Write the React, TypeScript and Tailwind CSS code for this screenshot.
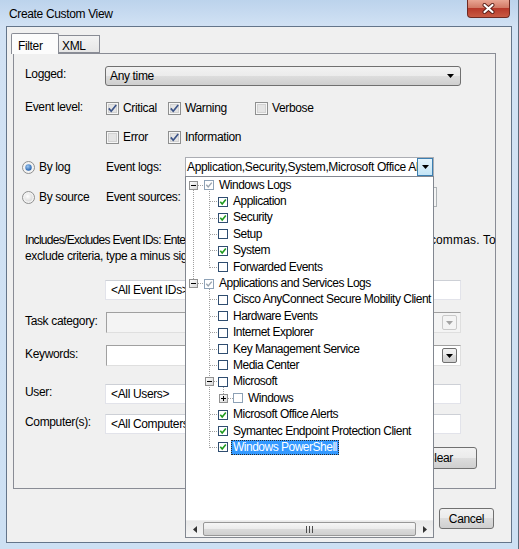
import React from 'react';

type TreeState = 'on' | 'off' | 'gray' | 'grayoff';

interface TreeItem {
  label: string;
  level: 0 | 1 | 2;
  state: TreeState;
  selected?: boolean;
}

const treeItems: TreeItem[] = [
  { label: 'Windows Logs', level: 0, state: 'gray' },
  { label: 'Application', level: 1, state: 'on' },
  { label: 'Security', level: 1, state: 'on' },
  { label: 'Setup', level: 1, state: 'off' },
  { label: 'System', level: 1, state: 'on' },
  { label: 'Forwarded Events', level: 1, state: 'off' },
  { label: 'Applications and Services Logs', level: 0, state: 'gray' },
  { label: 'Cisco AnyConnect Secure Mobility Client', level: 1, state: 'off' },
  { label: 'Hardware Events', level: 1, state: 'off' },
  { label: 'Internet Explorer', level: 1, state: 'off' },
  { label: 'Key Management Service', level: 1, state: 'off' },
  { label: 'Media Center', level: 1, state: 'off' },
  { label: 'Microsoft', level: 1, state: 'off' },
  { label: 'Windows', level: 2, state: 'grayoff' },
  { label: 'Microsoft Office Alerts', level: 1, state: 'on' },
  { label: 'Symantec Endpoint Protection Client', level: 1, state: 'on' },
  { label: 'Windows PowerShell', level: 1, state: 'on', selected: true },
];

const levelPad = ['pl-[18px]', 'pl-[32px]', 'pl-[47px]'];
const ROW_H = 16.4;
const cy = (i: number) => Math.floor(ROW_H * i + ROW_H / 2) + 0.5;

const btnBg = 'bg-[linear-gradient(#f2f2f2,#ebebeb_50%,#dddddd_50%,#cfcfcf)]';

const Arrow = ({ color = '#000' }: { color?: string }) => (
  <svg width="7" height="4" viewBox="0 0 7 4">
    <path d="M0 0H7L3.5 4Z" fill={color} />
  </svg>
);

const Check = ({ checked }: { checked?: boolean }) => (
  <svg width="13" height="13" viewBox="0 0 13 13" className="shrink-0">
    <rect x="0.5" y="0.5" width="12" height="12" fill="#f6f6f6" stroke="#8e8f8f" />
    <rect x="2.5" y="2.5" width="8" height="8" fill="#e4e4e4" stroke="#d2d2d2" />
    {checked && <path d="M2.8 6.4 5.2 9.2 10.2 3" fill="none" stroke="#3c5488" strokeWidth="1.7" />}
  </svg>
);

const Radio = ({ on }: { on?: boolean }) => (
  <svg width="13" height="13" viewBox="0 0 13 13" className="shrink-0">
    <defs>
      <radialGradient id={on ? 'rdon' : 'rdoff'} cx="0.4" cy="0.35" r="0.7">
        <stop offset="0" stopColor={on ? '#9cc7f2' : '#ffffff'} />
        <stop offset="1" stopColor={on ? '#1c5aa8' : '#d8d8d8'} />
      </radialGradient>
    </defs>
    <circle cx="6.5" cy="6.5" r="6" fill="#f3f3f3" stroke="#8e8f8f" />
    <circle cx="6.5" cy="6.5" r={on ? 3.2 : 4} fill={`url(#${on ? 'rdon' : 'rdoff'})`} />
  </svg>
);

const TreeCheck = ({ state }: { state: TreeState }) => {
  const light = state === 'gray' || state === 'grayoff';
  return (
    <svg width="10" height="10" viewBox="0 0 10 10" className="shrink-0">
      <rect x="0.5" y="0.5" width="9" height="9" fill="#fff" stroke={light ? '#8da1b6' : '#2f4d70'} />
      {state === 'on' && <path d="M2.3 4.8 4.2 7 7.8 2.6" fill="none" stroke="#1e9a1e" strokeWidth="1.6" />}
      {state === 'gray' && <path d="M2.3 4.8 4.2 7 7.8 2.6" fill="none" stroke="#9aa5b0" strokeWidth="1.4" />}
    </svg>
  );
};

const Expander = ({ x, y, open }: { x: number; y: number; open: boolean }) => (
  <g>
    <rect x={x - 4} y={y - 4} width="8" height="8" fill="url(#expg)" stroke="#919191" />
    <path d={`M${x - 2.5} ${y}H${x + 2.5}`} stroke="#000" />
    {!open && <path d={`M${x} ${y - 2.5}V${y + 2.5}`} stroke="#000" />}
  </g>
);

const TreeLines = () => {
  const d: string[] = [];
  // root items
  d.push(`M7.5 ${cy(0) + 4}V${cy(6) - 4}`);
  d.push(`M12 ${cy(0)}H18`, `M12 ${cy(6)}H18`);
  // Windows Logs children
  d.push(`M23.5 ${cy(0) + 5}V${cy(5)}`);
  [1, 2, 3, 4, 5].forEach(i => d.push(`M24 ${cy(i)}H32`));
  // Applications and Services Logs children
  d.push(`M23.5 ${cy(6) + 5}V${cy(16)}`);
  [7, 8, 9, 10, 11, 14, 15, 16].forEach(i => d.push(`M24 ${cy(i)}H32`));
  d.push(`M28 ${cy(12)}H32`);
  // Microsoft > Windows
  d.push(`M37.5 ${cy(12) + 5}V${cy(13) - 4}`);
  d.push(`M42 ${cy(13)}H47`);
  return (
    <svg className="absolute left-0 top-0 pointer-events-none" width="247" height="290" viewBox="0 0 247 290">
      <defs>
        <linearGradient id="expg" x1="0" y1="0" x2="1" y2="1">
          <stop offset="0" stopColor="#ffffff" />
          <stop offset="1" stopColor="#d6d6d6" />
        </linearGradient>
      </defs>
      <path d={d.join(' ')} stroke="#a0a0a0" strokeDasharray="1 1" fill="none" shapeRendering="crispEdges" />
      <Expander x={7.5} y={cy(0)} open />
      <Expander x={7.5} y={cy(6)} open />
      <Expander x={23.5} y={cy(12)} open />
      <Expander x={37.5} y={cy(13)} open={false} />
    </svg>
  );
};

const TextBox = ({ value, w = 'w-[356px]' }: { value?: string; w?: string }) => (
  <div className={`${w} h-full bg-white border border-[#e2e3ea] border-t-[#cdd0d6] flex items-center pl-[5px] whitespace-nowrap overflow-hidden`}>
    {value}
  </div>
);

const SunkenCombo = ({ disabled }: { disabled?: boolean }) => (
  <div className={`w-[355px] h-full border border-[#dfdfdf] border-t-[#a0a0a0] border-l-[#a0a0a0] flex justify-end items-stretch p-[1px] ${disabled ? 'bg-[#f4f4f4]' : 'bg-white'}`}>
    <div className={`w-[15px] mr-[2px] my-[1px] border rounded-[2px] flex items-center justify-center ${disabled ? 'border-[#c9c9c9] bg-[#f4f4f4]' : `border-[#707070] ${btnBg}`}`}>
      <Arrow color={disabled ? '#a3a3a3' : '#000'} />
    </div>
  </div>
);

const FormLabel = ({ children, w = 'w-[80px]' }: { children?: React.ReactNode; w?: string }) => (
  <div className={`${w} shrink-0 pb-[4px]`}>{children}</div>
);

export default function App() {
  return (
    <div className="relative w-[519px] h-[549px] overflow-hidden border-r border-[#5d6b7b] bg-[linear-gradient(#bcd3ec,#d2e2f4_27px,#cde0f3)] font-['Liberation_Sans',Arial,sans-serif] text-[12px] tracking-[-0.35px] text-black">
      {/* Title bar */}
      <div className="h-[26px] flex items-center pl-[9px] pt-[2px]">Create Custom View</div>
      <div className="absolute left-[467px] top-0 w-[43px] h-[18px] rounded-b-[4px] border border-t-0 border-[#6e2a22] bg-[linear-gradient(#e9a593,#d27a66_45%,#b7392a_50%,#c85a43)] flex items-center justify-center">
        <svg width="13" height="11" viewBox="0 0 13 11">
          <path d="M2.5 2 10.5 9M10.5 2 2.5 9" stroke="#5a1f18" strokeWidth="4" strokeLinecap="round" />
          <path d="M2.5 2 10.5 9M10.5 2 2.5 9" stroke="#ffffff" strokeWidth="2.2" strokeLinecap="round" />
        </svg>
      </div>

      {/* Client area */}
      <div className="ml-[6px] mr-[6px] h-[517px] border border-[#64758a] bg-[#f0f0f0] flex flex-col pl-[4px] pt-[6px]">
        {/* Tabs */}
        <div className="flex items-end h-[20px]">
          <div className="relative z-10 w-[48px] h-[21px] -mb-[1px] border border-b-0 border-[#898c95] bg-[#fcfcfc] rounded-t-[2px] pl-[6px] pt-[3px]">Filter</div>
          <div className="w-[41px] h-[18px] border border-l-0 border-[#898c95] bg-[linear-gradient(#f3f3f3,#e6e6e6)] pl-[3px] pt-[1px]">XML</div>
        </div>

        {/* Filter panel */}
        <div className="ml-[2px] w-[483px] h-[436px] border border-[#898c95] bg-[#f0f0f0] flex flex-col pl-[11px]">
          <div className="mt-[12px] h-[20px] flex items-center">
            <FormLabel>Logged:</FormLabel>
            <div className={`w-[356px] h-full rounded-[3px] border border-[#707070] ${btnBg} flex items-center justify-between pl-[4px] pr-[6px]`}>
              <span>Any time</span>
              <Arrow />
            </div>
          </div>

          <div className="mt-[15px] h-[14px] flex items-center">
            <div className="w-[81px] shrink-0 pb-[3px]">Event level:</div>
            <div className="w-[62px] flex items-center gap-[4px]"><Check checked />Critical</div>
            <div className="w-[87px] flex items-center gap-[4px]"><Check checked />Warning</div>
            <div className="flex items-center gap-[4px]"><Check />Verbose</div>
          </div>
          <div className="mt-[15px] h-[14px] flex items-center pl-[81px]">
            <div className="w-[62px] flex items-center gap-[4px]"><Check />Error</div>
            <div className="flex items-center gap-[4px]"><Check checked />Information</div>
          </div>

          <div className="mt-[13px] h-[20px] flex items-center -ml-[3px]">
            <div className="w-[84px] flex items-center gap-[4px]"><Radio on />By log</div>
            <div className="w-[79px]">Event logs:</div>
            <div className="w-[249px] h-full bg-white border border-[#abadb3] flex items-center">
              <span className="flex-1 pl-[1px] whitespace-nowrap overflow-hidden">Application,Security,System,Microsoft Office Alerts,Symantec</span>
              <div className="w-[16px] h-full border border-[#3c7fb1] bg-[linear-gradient(#e5f4fc,#c4e5f6)] flex items-center justify-center">
                <Arrow />
              </div>
            </div>
          </div>
          <div className="mt-[10px] h-[20px] flex items-center -ml-[3px]">
            <div className="w-[84px] flex items-center gap-[4px]"><Radio />By source</div>
            <div className="w-[79px]">Event sources:</div>
            <div className="w-[252px] h-full bg-[#f4f4f4] border border-[#adb2b5]" />
          </div>

          <div className="mt-[25px] leading-[16px] whitespace-nowrap">
            <div>
              <span className="tracking-[-0.7px]">Includes/Excludes Event IDs: Ente</span>
              <span className="tracking-[0.15px]">r ID numbers and/or ID ranges separated by commas. To</span>
            </div>
            <div>exclude criteria, type a minus sign first. For example 1,3,5-99,-76</div>
          </div>

          <div className="mt-[16px] h-[20px] flex items-center pl-[80px]">
            <TextBox value="<All Event IDs>" />
          </div>
          <div className="mt-[12px] h-[21px] flex items-center">
            <FormLabel w="w-[81px]">Task category:</FormLabel>
            <SunkenCombo disabled />
          </div>
          <div className="mt-[12px] h-[21px] flex items-center">
            <FormLabel w="w-[81px]">Keywords:</FormLabel>
            <SunkenCombo />
          </div>
          <div className="mt-[18px] h-[20px] flex items-center">
            <FormLabel>User:</FormLabel>
            <TextBox value="<All Users>" />
          </div>
          <div className="mt-[10px] h-[20px] flex items-center">
            <FormLabel>Computer(s):</FormLabel>
            <TextBox value="<All Computers>" />
          </div>
          <div className="mt-[13px] h-[22px] flex justify-end pr-[18px]">
            <div className={`w-[75px] h-full rounded-[3px] border border-[#707070] ${btnBg} flex items-center justify-center`}>Clear</div>
          </div>
        </div>

        {/* Dialog buttons */}
        <div className="mt-[19px] h-[21px] flex justify-end gap-[7px] pr-[17px]">
          <div className={`w-[75px] h-full rounded-[3px] border border-[#3c7fb1] ${btnBg} flex items-center justify-center`}>OK</div>
          <div className={`w-[55px] h-full rounded-[3px] border border-[#707070] ${btnBg} flex items-center justify-center`}>Cancel</div>
        </div>
      </div>

      {/* Event logs drop-down tree */}
      <div className="absolute left-[185px] top-[176px] z-20 w-[249px] h-[362px] border border-[#828790] bg-white flex flex-col tracking-[-0.5px]">
        <div className="relative flex-1 overflow-hidden">
          <TreeLines />
          {treeItems.map(item => (
            <div key={item.label} className={`h-[16.4px] flex items-center whitespace-nowrap ${levelPad[item.level]}`}>
              <TreeCheck state={item.state} />
              <span
                className={`ml-[3px] px-[2px] leading-[15px] ${item.selected ? 'bg-[#3399ff] text-white outline outline-1 outline-dotted outline-[#2a2a2a] -outline-offset-1' : ''}`}
              >
                {item.label}
              </span>
            </div>
          ))}
        </div>
        <div className="h-[17px] flex bg-[linear-gradient(#e9e9e9,#f5f5f5)] border-t border-[#f0f0f0]">
          <div className="w-[17px] flex items-center justify-center">
            <svg width="4" height="7" viewBox="0 0 4 7"><path d="M4 0V7L0 3.5Z" fill="#333" /></svg>
          </div>
          <div className="flex-1 my-[1px] rounded-[2px] border border-[#979797] bg-[linear-gradient(#f6f6f6,#ebebeb_50%,#dbdbdb_50%,#cfcfcf)] flex items-center justify-center">
            <svg width="7" height="7" viewBox="0 0 7 7">
              <path d="M0.5 0V7M3.5 0V7M6.5 0V7" stroke="#4d4d4d" />
            </svg>
          </div>
          <div className="w-[17px] flex items-center justify-center">
            <svg width="4" height="7" viewBox="0 0 4 7"><path d="M0 0V7L4 3.5Z" fill="#333" /></svg>
          </div>
        </div>
      </div>
    </div>
  );
}
